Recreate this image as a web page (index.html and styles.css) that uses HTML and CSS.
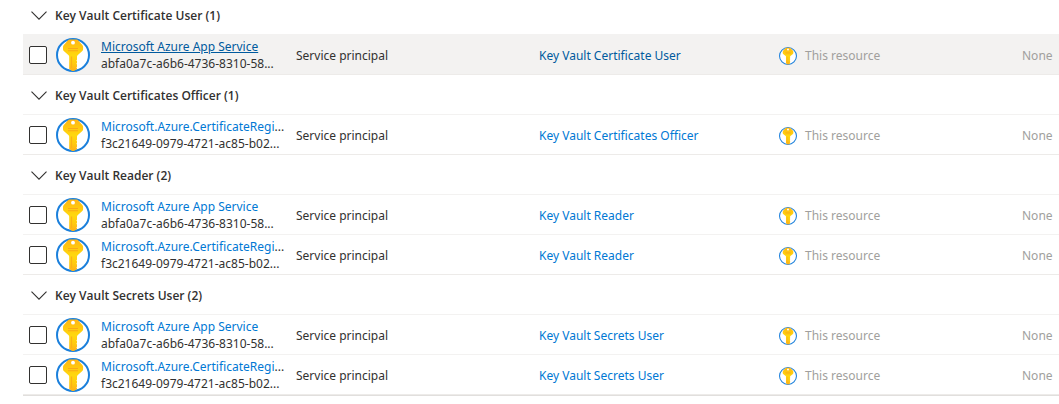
FILE: index.html
```html
<!DOCTYPE html>
<html lang="en">
<head>
    <meta charset="UTF-8">
    <meta name="viewport" content="width=device-width, initial-scale=1.0">
    <title>Role assignments</title>
    <link rel="stylesheet" href="styles.css">
</head>
<body>
    <svg class="sprite" aria-hidden="true">
        <defs>
            <linearGradient id="keyFill" x1="0" y1="0" x2="0" y2="1">
                <stop offset="0" stop-color="#ffb515"/>
                <stop offset="0.25" stop-color="#ffc80f"/>
                <stop offset="0.5" stop-color="#ffd70f"/>
                <stop offset="0.75" stop-color="#ffcb12"/>
                <stop offset="1" stop-color="#feb01b"/>
            </linearGradient>
        </defs>
        <symbol id="key" viewBox="0 0 34 34">
            <circle cx="17" cy="17" r="16" fill="#fff" stroke="#1b80dc" stroke-width="2"/>
            <path d="M13.5 1.500h7q.9 0 1.600.8l4.200 4.700q.8.9.8 2v2.300q0 .9-.8 1.700l-4.700 4.200q-.6.6-.6 1.500v3l-.6.8.6.8v1.600l-.6.8.6.8v2.200l-.6.8.6.8v.8L18 33h-2l-2.800-2.300V18.700q0-.9-.6-1.500L7.800 13q-.8-.8-.8-1.700V9q0-1.100.8-2L12 2.300q.7-.8 1.500-.8z" fill="url(#keyFill)"/>
            <circle cx="17" cy="4.700" r="1.9" fill="#fff"/>
            <path d="M12 10.500h10M12 12.800h10" stroke="#f9a81a" stroke-width="1.1"/>
            <path d="M15.500 18.500v11.500" stroke="#fbb01a" stroke-width="1.200"/>
        </symbol>
        <symbol id="chevron" viewBox="0 0 16 9">
            <path d="M.5.7 8 8.2 15.500.7" fill="none" stroke="#323130" stroke-width="1.1"/>
        </symbol>
    </svg>

    <table class="assignments">
        <colgroup>
            <col class="col-check">
            <col class="col-name">
            <col class="col-type">
            <col class="col-role">
            <col class="col-scope">
            <col>
        </colgroup>
        <tbody>
            <tr>
                <th class="group" colspan="6"><button class="toggle" type="button"><svg class="chevron"><use href="#chevron"/></svg>Key Vault Certificate User (1)</button></th>
            </tr>
            <tr class="active">
                <td><input class="check" type="checkbox" aria-label="Select Microsoft Azure App Service"></td>
                <td>
                    <div class="principal">
                        <svg class="icon-large"><use href="#key"/></svg>
                        <div class="principal-text">
                            <div><a href="#">Microsoft Azure App Service</a></div>
                            <div>abfa0a7c-a6b6-4736-8310-58...</div>
                        </div>
                    </div>
                </td>
                <td class="text">Service principal</td>
                <td class="text"><a href="#">Key Vault Certificate User</a></td>
                <td class="text"><div class="scope"><svg class="icon-small"><use href="#key"/></svg>This resource</div></td>
                <td class="text muted">None</td>
            </tr>
        </tbody>
        <tbody>
            <tr>
                <th class="group" colspan="6"><button class="toggle" type="button"><svg class="chevron"><use href="#chevron"/></svg>Key Vault Certificates Officer (1)</button></th>
            </tr>
            <tr>
                <td><input class="check" type="checkbox" aria-label="Select Microsoft.Azure.CertificateRegi..."></td>
                <td>
                    <div class="principal">
                        <svg class="icon-large"><use href="#key"/></svg>
                        <div class="principal-text">
                            <div><a href="#">Microsoft.Azure.CertificateRegi</a>...</div>
                            <div>f3c21649-0979-4721-ac85-b02...</div>
                        </div>
                    </div>
                </td>
                <td class="text">Service principal</td>
                <td class="text"><a href="#">Key Vault Certificates Officer</a></td>
                <td class="text"><div class="scope"><svg class="icon-small"><use href="#key"/></svg>This resource</div></td>
                <td class="text muted">None</td>
            </tr>
        </tbody>
        <tbody>
            <tr>
                <th class="group" colspan="6"><button class="toggle" type="button"><svg class="chevron"><use href="#chevron"/></svg>Key Vault Reader (2)</button></th>
            </tr>
            <tr>
                <td><input class="check" type="checkbox" aria-label="Select Microsoft Azure App Service"></td>
                <td>
                    <div class="principal">
                        <svg class="icon-large"><use href="#key"/></svg>
                        <div class="principal-text">
                            <div><a href="#">Microsoft Azure App Service</a></div>
                            <div>abfa0a7c-a6b6-4736-8310-58...</div>
                        </div>
                    </div>
                </td>
                <td class="text">Service principal</td>
                <td class="text"><a href="#">Key Vault Reader</a></td>
                <td class="text"><div class="scope"><svg class="icon-small"><use href="#key"/></svg>This resource</div></td>
                <td class="text muted">None</td>
            </tr>
            <tr>
                <td><input class="check" type="checkbox" aria-label="Select Microsoft.Azure.CertificateRegi..."></td>
                <td>
                    <div class="principal">
                        <svg class="icon-large"><use href="#key"/></svg>
                        <div class="principal-text">
                            <div><a href="#">Microsoft.Azure.CertificateRegi</a>...</div>
                            <div>f3c21649-0979-4721-ac85-b02...</div>
                        </div>
                    </div>
                </td>
                <td class="text">Service principal</td>
                <td class="text"><a href="#">Key Vault Reader</a></td>
                <td class="text"><div class="scope"><svg class="icon-small"><use href="#key"/></svg>This resource</div></td>
                <td class="text muted">None</td>
            </tr>
        </tbody>
        <tbody>
            <tr>
                <th class="group" colspan="6"><button class="toggle" type="button"><svg class="chevron"><use href="#chevron"/></svg>Key Vault Secrets User (2)</button></th>
            </tr>
            <tr>
                <td><input class="check" type="checkbox" aria-label="Select Microsoft Azure App Service"></td>
                <td>
                    <div class="principal">
                        <svg class="icon-large"><use href="#key"/></svg>
                        <div class="principal-text">
                            <div><a href="#">Microsoft Azure App Service</a></div>
                            <div>abfa0a7c-a6b6-4736-8310-58...</div>
                        </div>
                    </div>
                </td>
                <td class="text">Service principal</td>
                <td class="text"><a href="#">Key Vault Secrets User</a></td>
                <td class="text"><div class="scope"><svg class="icon-small"><use href="#key"/></svg>This resource</div></td>
                <td class="text muted">None</td>
            </tr>
            <tr>
                <td><input class="check" type="checkbox" aria-label="Select Microsoft.Azure.CertificateRegi..."></td>
                <td>
                    <div class="principal">
                        <svg class="icon-large"><use href="#key"/></svg>
                        <div class="principal-text">
                            <div><a href="#">Microsoft.Azure.CertificateRegi</a>...</div>
                            <div>f3c21649-0979-4721-ac85-b02...</div>
                        </div>
                    </div>
                </td>
                <td class="text">Service principal</td>
                <td class="text"><a href="#">Key Vault Secrets User</a></td>
                <td class="text"><div class="scope"><svg class="icon-small"><use href="#key"/></svg>This resource</div></td>
                <td class="text muted">None</td>
            </tr>
        </tbody>
    </table>
</body>
</html>
```
FILE: styles.css
```css
body {
    font-family: "Segoe UI", "Noto Sans", sans-serif;
    font-size: 12px;
    line-height: 17px;
    margin: 0;
    padding-left: 23px;
    color: #323130;
    background-color: #fff;
    overflow: hidden;
}
.sprite {
    display: block;
    width: 0;
    height: 0;
}
a {
    color: #0078d4;
    text-decoration: none;
}
.assignments {
    width: 100%;
    margin-top: -5px;
    table-layout: fixed;
    border-collapse: separate;
    border-spacing: 0;
    border-bottom: 1px solid #e1dfdd;
}
.col-check {
    width: 33px;
}
.col-name, .col-role {
    width: 240px;
}
.col-type, .col-scope {
    width: 243px;
}
.assignments td, .assignments th {
    box-sizing: border-box;
    height: 40px;
    padding: 0;
    border-bottom: 1px solid #f3f2f1;
    text-align: left;
    vertical-align: middle;
    white-space: nowrap;
}
.assignments .text, .assignments .group {
    padding-top: 2px;
}
.assignments tr:last-child td {
    border-bottom-color: #edebe9;
}
.toggle {
    display: flex;
    align-items: center;
    gap: 8px;
    padding: 0 0 0 8px;
    border: none;
    background: none;
    font-family: "Segoe UI", "Open Sans", sans-serif;
    font-size: 12px;
    font-weight: 600;
    line-height: 17px;
    color: #323130;
    cursor: pointer;
}
.chevron {
    width: 16px;
    height: 9px;
}
.active td {
    background-color: #f3f2f1;
}
.active a {
    color: #005a9e;
}
.active .principal a, a:hover {
    text-decoration: underline;
}
.check {
    appearance: none;
    display: block;
    box-sizing: border-box;
    width: 18px;
    height: 18px;
    margin: 0 0 0 6px;
    border: 1px solid #323130;
    border-radius: 2px;
    background-color: #fff;
    cursor: pointer;
}
.check:checked {
    background-color: #0078d4;
    border-color: #0078d4;
}
.principal {
    display: flex;
    align-items: center;
    gap: 11px;
}
.icon-large {
    width: 34px;
    height: 34px;
}
.scope {
    display: flex;
    align-items: center;
    gap: 8px;
    color: #a19f9d;
}
.icon-small {
    width: 18px;
    height: 18px;
}
.muted {
    color: #a19f9d;
}
```
